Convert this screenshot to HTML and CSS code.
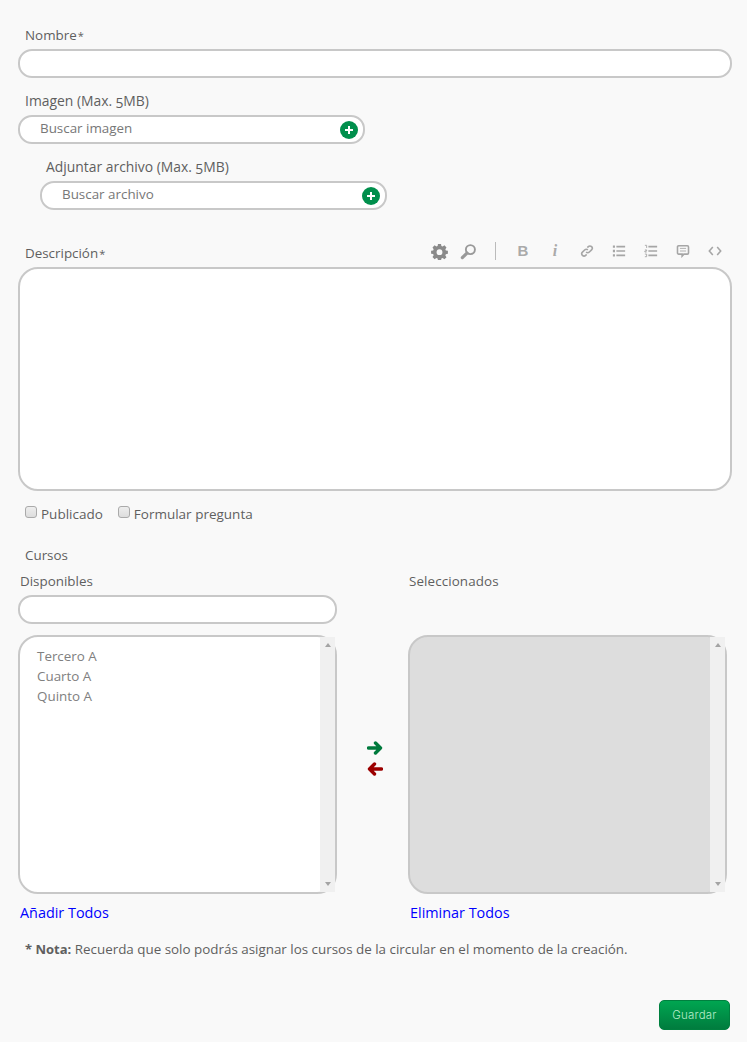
FILE: index.html
```html
<!DOCTYPE html>
<html lang="es">
<head>
    <meta charset="UTF-8">
    <meta name="viewport" content="width=device-width, initial-scale=1.0">
    <title>Nueva circular</title>
    <link rel="stylesheet" href="styles.css">
</head>
<body>
    <form class="circular-form">
        <div class="field">
            <label class="field-label">Nombre<span class="req">*</span></label>
            <input type="text" class="text-input">
        </div>

        <div class="field file-field">
            <label class="field-label">Imagen (Max. 5MB)</label>
            <div class="text-input file-input">
                <span class="file-text">Buscar imagen</span>
                <svg class="plus-icon" viewBox="0 0 18 18"><circle cx="9" cy="9" r="9"/><path d="M9 5v8M5 9h8"/></svg>
            </div>
        </div>

        <div class="field file-field file-field-indent">
            <label class="field-label">Adjuntar archivo (Max. 5MB)</label>
            <div class="text-input file-input">
                <span class="file-text">Buscar archivo</span>
                <svg class="plus-icon" viewBox="0 0 18 18"><circle cx="9" cy="9" r="9"/><path d="M9 5v8M5 9h8"/></svg>
            </div>
        </div>

        <div class="editor">
            <div class="editor-head">
                <label class="field-label">Descripción<span class="req">*</span></label>
                <div class="toolbar">
                    <span class="tool tool-gear">
                        <svg class="tool-dark" viewBox="0 0 18 18"><path fill-rule="evenodd" d="M7.4 1h3.2l.4 2.2 1.3.6 1.9-1.3 2.2 2.3-1.2 1.8.5 1.3 2.2.4v3.2l-2.2.4-.5 1.3 1.2 1.8-2.2 2.3-1.9-1.3-1.3.5-.4 2.2H7.4L7 16.3l-1.3-.5-1.9 1.3-2.2-2.3 1.2-1.8-.5-1.3-2.2-.4V8.3l2.2-.4.5-1.3-1.2-1.8 2.2-2.3 1.9 1.3L7 3.2zM9 6.6a3.1 3.1 0 1 0 0 6.2 3.1 3.1 0 0 0 0-6.2z"/></svg>
                    </span>
                    <span class="tool tool-search">
                        <svg class="tool-dark" viewBox="0 0 18 18"><circle class="ring" cx="11" cy="7" r="4.8"/><path class="handle" d="M7.4 10.6 2.5 15.5"/></svg>
                    </span>
                    <span class="tool-sep"></span>
                    <span class="tool tool-b">B</span>
                    <span class="tool tool-i">i</span>
                    <span class="tool">
                        <svg viewBox="0 0 16 16"><path class="line" d="M7 9.2a2.6 2.6 0 0 0 3.7 0l2.5-2.5a2.6 2.6 0 0 0-3.7-3.7L8.4 4.1"/><path class="line" d="M9 6.8a2.6 2.6 0 0 0-3.7 0L2.8 9.3A2.6 2.6 0 0 0 6.5 13l1.1-1.1"/></svg>
                    </span>
                    <span class="tool">
                        <svg viewBox="0 0 16 16"><path class="line" d="M5 3h10M5 8h10M5 13h10"/><path class="line square" d="M1 3h2.4M1 8h2.4M1 13h2.4"/></svg>
                    </span>
                    <span class="tool">
                        <svg viewBox="0 0 16 16"><path class="line" d="M5 3h10M5 8h10M5 13h10"/><path class="line thin" d="M1 1.5h2v3M1 6.8h2v1.2H1v1.2h2M1 11.5h2v3H1"/></svg>
                    </span>
                    <span class="tool">
                        <svg viewBox="0 0 16 16"><path class="line" d="M3 2h10a1.3 1.3 0 0 1 1.3 1.3v7a1.3 1.3 0 0 1-1.3 1.3H9l-2 2.2v-2.2H3a1.3 1.3 0 0 1-1.3-1.3v-7A1.3 1.3 0 0 1 3 2z"/><path class="line thin" d="M4.5 5h7M4.5 8h7"/></svg>
                    </span>
                    <span class="tool">
                        <svg viewBox="0 0 16 16"><path class="line" d="M5.5 3.5 1.5 8l4 4.5M10.5 3.5l4 4.5-4 4.5"/></svg>
                    </span>
                </div>
            </div>
            <textarea class="text-area"></textarea>
        </div>

        <div class="checks">
            <label class="check"><input type="checkbox"> Publicado</label>
            <label class="check"><input type="checkbox"> Formular pregunta</label>
        </div>

        <label class="field-label cursos-label">Cursos</label>

        <div class="picker">
            <div class="picker-col">
                <label class="col-label">Disponibles</label>
                <input type="text" class="text-input">
                <div class="listbox">
                    <ul class="list-items">
                        <li>Tercero A</li>
                        <li>Cuarto A</li>
                        <li>Quinto A</li>
                    </ul>
                    <div class="scrollbar"><span class="up"></span><span class="down"></span></div>
                </div>
                <a class="col-link" href="#">Añadir Todos</a>
            </div>

            <div class="picker-arrows">
                <svg class="arrow arrow-add" viewBox="0 0 16 14"><path d="M1.5 7h12M8.5 2 13.5 7l-5 5"/></svg>
                <svg class="arrow arrow-remove" viewBox="0 0 16 14"><path d="M14.5 7h-12M7.5 2 2.5 7l5 5"/></svg>
            </div>

            <div class="picker-col picker-col-right">
                <label class="col-label">Seleccionados</label>
                <div class="listbox listbox-selected">
                    <ul class="list-items"></ul>
                    <div class="scrollbar"><span class="up"></span><span class="down"></span></div>
                </div>
                <a class="col-link" href="#">Eliminar Todos</a>
            </div>
        </div>

        <p class="note"><strong>* Nota:</strong> Recuerda que solo podrás asignar los cursos de la circular en el momento de la creación.</p>

        <div class="actions">
            <button type="button" class="btn-save">Guardar</button>
        </div>
    </form>
</body>
</html>
```

FILE: styles.css
```css
html, body {
    margin: 0;
    padding: 0;
}
body {
    background-color: #f9f9f9;
    color: #5f5f5f;
    font-family: "Open Sans", sans-serif;
    font-size: 13.4px;
    line-height: 18px;
    font-variant-numeric: oldstyle-nums;
}
.circular-form {
    padding: 26px 15px 12px 18px;
}
.field {
    margin-bottom: 14px;
}
.field-label {
    display: block;
    padding-left: 7px;
    margin-bottom: 5px;
}
.req {
    margin-left: 1px;
    font-size: 11px;
    line-height: 0;
}
.text-input {
    display: block;
    box-sizing: border-box;
    width: 100%;
    height: 29px;
    background-color: #fff;
    border: 2px solid #c8c8c8;
    border-radius: 14px;
    outline: none;
}
.file-field {
    width: 347px;
}
.file-field .field-label {
    font-size: 13.9px;
}
.file-field-indent {
    margin-left: 22px;
    margin-bottom: 34px;
}
.file-field-indent .field-label {
    padding-left: 6px;
}
.file-input {
    display: flex;
    align-items: center;
    justify-content: space-between;
    padding: 0 5px 0 20px;
    color: #777;
}
.file-text {
    margin-top: -3px;
}
.plus-icon {
    width: 18px;
    height: 18px;
}
.plus-icon circle {
    fill: #008f4c;
}
.plus-icon path {
    fill: none;
    stroke: #fff;
    stroke-width: 2;
}

/* editor */
.editor-head {
    display: flex;
    justify-content: space-between;
    align-items: flex-start;
    height: 23px;
}
.toolbar {
    display: flex;
    align-items: center;
    height: 14px;
    padding-right: 1px;
}
.tool {
    display: flex;
    align-items: center;
    justify-content: center;
    width: 32px;
    height: 18px;
    color: #aaa;
}
.tool svg {
    width: 14px;
    height: 14px;
}
.tool svg.tool-dark {
    width: 17px;
    height: 17px;
    fill: #8a8a8a;
}
.tool-gear, .tool-search {
    width: 28px;
}
.tool-gear svg {
    margin-right: 2px;
}
.tool-sep {
    width: 1px;
    height: 18px;
    margin: 0 11px 0 13px;
    background-color: #bbb;
}
.tool-b {
    font-family: "Liberation Sans", sans-serif;
    font-size: 15px;
    font-weight: bold;
}
.tool-i {
    font-family: "Liberation Serif", serif;
    font-size: 16px;
    font-weight: bold;
    font-style: italic;
}
.ring {
    fill: none;
    stroke: #999;
    stroke-width: 2;
}
.handle {
    fill: none;
    stroke: #999;
    stroke-width: 3.4;
    stroke-linecap: round;
}
.line {
    fill: none;
    stroke: #a6a6a6;
    stroke-width: 1.8;
}
.line.square {
    stroke-width: 2.6;
}
.line.thin {
    stroke-width: 1;
}
.text-area {
    display: block;
    box-sizing: border-box;
    width: 100%;
    height: 224px;
    background-color: #fff;
    border: 2px solid #c8c8c8;
    border-radius: 20px;
    outline: none;
    resize: none;
}

/* checkboxes */
.checks {
    display: flex;
    gap: 15px;
    margin-top: 14px;
    padding-left: 7px;
    font-size: 13.5px;
}
.check {
    display: flex;
    align-items: center;
    gap: 4px;
}
.check input {
    appearance: none;
    box-sizing: border-box;
    width: 12px;
    height: 12px;
    margin: -4px 0 0 0;
    background: linear-gradient(#eee, #ddd);
    border: 1px solid #aaa;
    border-radius: 3px;
}
.cursos-label {
    margin: 23px 0 8px;
}

/* course picker */
.picker {
    display: grid;
    grid-template-columns: 319px 71px 319px;
}
.picker-col {
    display: flex;
    flex-direction: column;
}
.col-label {
    display: block;
    height: 18px;
    padding-left: 2px;
    margin-bottom: 5px;
}
.picker-col-right .col-label {
    padding-left: 1px;
    letter-spacing: 0.1px;
}
.picker-col .text-input {
    margin-bottom: 11px;
}
.listbox {
    display: flex;
    box-sizing: border-box;
    height: 259px;
    background-color: #fff;
    border: 2px solid #c8c8c8;
    border-radius: 20px;
}
.listbox-selected {
    margin-top: 40px;
    background-color: #ddd;
}
.list-items {
    flex: 1;
    margin: 0;
    padding: 9px 17px;
    list-style: none;
    color: #808080;
    line-height: 20px;
}
.scrollbar {
    display: flex;
    flex-direction: column;
    justify-content: space-between;
    align-items: center;
    box-sizing: border-box;
    width: 15px;
    padding: 6px 0;
    background-color: #f0f0f0;
}
.up, .down {
    width: 0;
    height: 0;
    border-left: 3.5px solid transparent;
    border-right: 3.5px solid transparent;
}
.up {
    border-bottom: 4px solid #a3a3a3;
}
.down {
    border-top: 4px solid #a3a3a3;
}
.col-link {
    display: block;
    height: 18px;
    margin-top: 10px;
    padding-left: 2px;
    color: #00f;
    font-size: 14.4px;
    text-decoration: none;
}
.picker-arrows {
    display: flex;
    flex-direction: column;
    align-items: center;
    justify-content: center;
    gap: 7px;
    padding: 23px 0 0 4px;
}
.arrow {
    width: 16px;
    height: 14px;
    fill: none;
    stroke-width: 3.4;
    stroke-linecap: round;
    stroke-linejoin: round;
}
.arrow-add {
    stroke: #007a3d;
}
.arrow-remove {
    stroke: #9c0000;
}
.note {
    margin: 18px 0 0;
    padding-left: 7px;
}
.note strong {
    font-size: 13px;
}
.actions {
    display: flex;
    justify-content: flex-end;
    margin-top: 42px;
    padding-right: 2px;
}
.btn-save {
    width: 71px;
    height: 30px;
    padding: 0;
    background: linear-gradient(#00a651, #007c3e);
    border: 1px solid #00803f;
    border-radius: 5px;
    color: #b5ecc9;
    font-family: "Inter", sans-serif;
    font-size: 11.5px;
    font-weight: 300;
    letter-spacing: 0.2px;
}
```
